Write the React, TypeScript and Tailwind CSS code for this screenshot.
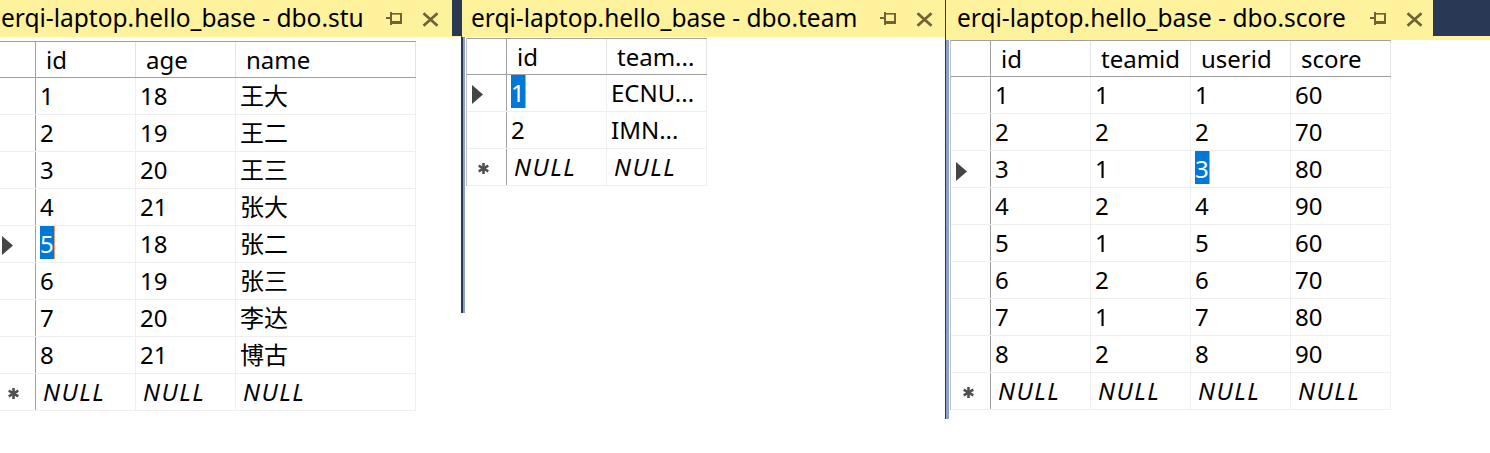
import React from "react";

const FONT = "font-['Noto_Sans','Noto_Sans_CJK_SC',sans-serif]";

function Pin() {
  return (
    <svg width="17" height="14" viewBox="0 0 17 14" className="shrink-0">
      <rect x="0" y="5" width="5" height="2" fill="#6f6236" />
      <rect x="4" y="0" width="2" height="13" fill="#6f6236" />
      <rect x="6" y="1" width="10" height="1.6" fill="#6f6236" />
      <rect x="14" y="1" width="2" height="11" fill="#6f6236" />
      <rect x="6" y="9" width="10" height="3" fill="#6f6236" />
    </svg>
  );
}

function CloseX() {
  return (
    <svg width="17" height="15" viewBox="0 0 17 15" className="shrink-0">
      <path d="M1.5 1.2 L15.5 13.8 M15.5 1.2 L1.5 13.8" stroke="#6f6236" strokeWidth="2.7" />
    </svg>
  );
}

function Tab({ title, cls }: { title: string; cls: string }) {
  return (
    <div className={`flex h-full shrink-0 items-start bg-[#fff29d] ${cls}`}>
      <span className="whitespace-nowrap text-[24.5px] leading-[36px] text-black">{title}</span>
      <div className="flex-1" />
      <div className="mt-[12px] mr-[19px]">
        <Pin />
      </div>
      <div className="mt-[12px]">
        <CloseX />
      </div>
    </div>
  );
}

function Triangle() {
  return (
    <svg width="11" height="19" viewBox="0 0 11 19">
      <path d="M0 0 L11 9.5 L0 19 Z" fill="#444444" />
    </svg>
  );
}

function Star() {
  return (
    <svg width="11" height="11" viewBox="0 0 11 11">
      <g stroke="#505050" strokeWidth="2.6" strokeLinecap="butt">
        <path d="M5.5 0 L5.5 11" />
        <path d="M0.7 2.7 L10.3 8.3" />
        <path d="M10.3 2.7 L0.7 8.3" />
      </g>
    </svg>
  );
}

type Col = { h: string; w: string };

function Grid({
  cols,
  rows,
  current,
  sel,
  rhCls,
  triCls,
  starCls,
}: {
  cols: Col[];
  rows: string[][];
  current: number;
  sel: [number, number];
  rhCls: string;
  triCls: string;
  starCls: string;
}) {
  return (
    <div className="flex w-max flex-col text-[24px] text-black">
      <div className="flex h-[37px] border-y border-[#a0a0a0]">
        <div className={`shrink-0 border-r border-[#a0a0a0] ${rhCls}`} />
        {cols.map((c, i) => (
          <div
            key={i}
            className={`shrink-0 overflow-hidden whitespace-nowrap border-r border-[#e3e3e3] pl-[10px] leading-[35px] ${c.w}`}
          >
            {c.h}
          </div>
        ))}
      </div>
      {rows.map((r, ri) => (
        <div key={ri} className="flex h-[37px] border-b border-[#efefef]">
          <div className={`shrink-0 border-r border-[#a0a0a0] ${rhCls}`}>
            {ri === current && (
              <div className={triCls}>
                <Triangle />
              </div>
            )}
          </div>
          {cols.map((c, ci) => (
            <div
              key={ci}
              className={`shrink-0 overflow-hidden whitespace-nowrap border-r border-[#efefef] pl-[4px] leading-[36px] ${c.w}`}
            >
              {ri === sel[0] && ci === sel[1] ? (
                <span className="inline-block h-[33px] border-r border-[#e8a060] bg-[#0078d7] align-top text-white">
                  {r[ci]}
                </span>
              ) : (
                r[ci]
              )}
            </div>
          ))}
        </div>
      ))}
      <div className="flex h-[37px] border-b border-[#efefef]">
        <div className={`shrink-0 border-r border-[#a0a0a0] ${rhCls}`}>
          <div className={starCls}>
            <Star />
          </div>
        </div>
        {cols.map((c, ci) => (
          <div
            key={ci}
            className={`shrink-0 border-r border-[#efefef] pl-[7px] italic tracking-[1.5px] leading-[36px] ${c.w}`}
          >
            NULL
          </div>
        ))}
      </div>
    </div>
  );
}

const stuRows = [
  ["1", "18", "王大"],
  ["2", "19", "王二"],
  ["3", "20", "王三"],
  ["4", "21", "张大"],
  ["5", "18", "张二"],
  ["6", "19", "张三"],
  ["7", "20", "李达"],
  ["8", "21", "博古"],
];

const teamRows = [
  ["1", "ECNU..."],
  ["2", "IMN..."],
];

const scores = ["60", "70", "80", "90", "60", "70", "80", "90"];
const scoreRows = scores.map((s, i) => [String(i + 1), i % 2 === 0 ? "1" : "2", String(i + 1), s]);

export default function App() {
  return (
    <div className={`flex h-[453px] w-[1490px] overflow-hidden bg-white ${FONT}`}>
      {/* Panel 1 */}
      <div className="flex w-[461px] shrink-0 flex-col">
        <div className="flex h-[36px]">
          <Tab title="erqi-laptop.hello_base - dbo.stu" cls="w-[452px] pl-[1px] pr-[13px]" />
          <div className="flex-1 bg-[#293955]" />
        </div>
        <div className="h-px bg-[#fff29d]" />
        <div className="pt-[4px]">
          <Grid
            cols={[
              { h: "id", w: "w-[100px]" },
              { h: "age", w: "w-[100px]" },
              { h: "name", w: "w-[180px]" },
            ]}
            rows={stuRows}
            current={4}
            sel={[4, 0]}
            rhCls="w-[36px]"
            triCls="pl-[2px] pt-[10px]"
            starCls="pl-[8px] pt-[14px]"
          />
        </div>
      </div>

      {/* Panel 2 */}
      <div className="flex w-[484px] shrink-0">
        <div className="h-[313px] w-px bg-[#293955]" />
        <div className="flex flex-1 flex-col">
          <div className="flex h-[36px]">
            <Tab title="erqi-laptop.hello_base - dbo.team" cls="w-full pl-[9px] pr-[12px]" />
          </div>
          <div className="h-px bg-[#fff29d]" />
          <div className="flex h-[276px]">
            <div className="w-px bg-[#293955]" />
            <div className="w-[2px] bg-[#8fa0c8]" />
            <div className="pl-px pt-px">
              <div className="border-l border-[#c0c0c0]">
                <Grid
                  cols={[
                    { h: "id", w: "w-[100px]" },
                    { h: "team...", w: "w-[100px]" },
                  ]}
                  rows={teamRows}
                  current={0}
                  sel={[0, 0]}
                  rhCls="w-[40px]"
                  triCls="pl-[5px] pt-[10px]"
                  starCls="pl-[11px] pt-[14px]"
                />
              </div>
            </div>
          </div>
        </div>
      </div>

      {/* Panel 3 */}
      <div className="flex flex-1">
        <div className="h-[419px] w-px bg-[#293955]" />
        <div className="flex flex-1 flex-col">
          <div className="flex h-[36px]">
            <Tab title="erqi-laptop.hello_base - dbo.score" cls="w-[487px] pl-[11px] pr-[10px]" />
            <div className="flex-1 bg-[#293955]" />
          </div>
          <div className="h-[4px] bg-[#fff29d]" />
          <div className="flex h-[379px]">
            <div className="w-[3px] bg-[#8fa0c8]" />
            <div className="pl-px">
              <div className="border-l border-[#c0c0c0]">
                <Grid
                  cols={[
                    { h: "id", w: "w-[100px]" },
                    { h: "teamid", w: "w-[100px]" },
                    { h: "userid", w: "w-[100px]" },
                    { h: "score", w: "w-[100px]" },
                  ]}
                  rows={scoreRows}
                  current={2}
                  sel={[2, 2]}
                  rhCls="w-[40px]"
                  triCls="pl-[5px] pt-[11px]"
                  starCls="pl-[12px] pt-[14px]"
                />
              </div>
            </div>
          </div>
        </div>
      </div>
    </div>
  );
}
